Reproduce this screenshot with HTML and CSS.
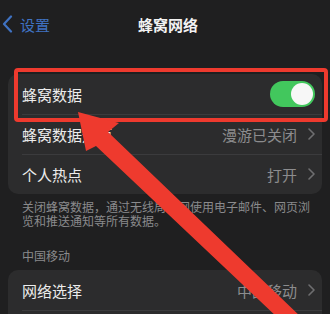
FILE: index.html
```html
<!DOCTYPE html>
<html lang="zh-CN">
<head>
<meta charset="utf-8">
<title>蜂窝网络</title>
<link rel="stylesheet" href="styles.css">
</head>
<body>
<div class="screen">
  <header class="nav">
    <div class="back">
      <svg class="back-icon" width="11" height="18" viewBox="0 0 11 18"><path d="M9 1.5 L2 9 L9 16.5" fill="none" stroke="#3f72c2" stroke-width="2.2" stroke-linecap="round" stroke-linejoin="round"/></svg>
      <span>设置</span>
    </div>
    <div class="title">蜂窝网络</div>
    <div></div>
  </header>

  <section class="card first">
    <div class="row">
      <span class="label">蜂窝数据</span>
      <span class="switch"><span class="knob"></span></span>
    </div>
    <div class="row">
      <span class="label">蜂窝数据选项</span>
      <span class="value">漫游已关闭<svg class="chev" width="7" height="12" viewBox="0 0 7 12"><path d="M1 1 L6 6 L1 11" fill="none" stroke="#6e6e70" stroke-width="1.6" stroke-linecap="round" stroke-linejoin="round"/></svg></span>
    </div>
    <div class="row">
      <span class="label">个人热点</span>
      <span class="value">打开<svg class="chev" width="7" height="12" viewBox="0 0 7 12"><path d="M1 1 L6 6 L1 11" fill="none" stroke="#6e6e70" stroke-width="1.6" stroke-linecap="round" stroke-linejoin="round"/></svg></span>
    </div>
  </section>

  <p class="footnote">关闭蜂窝数据，通过无线局域网使用电子邮件、网页浏<br>览和推送通知等所有数据。</p>

  <div class="section-head">中国移动</div>

  <section class="card">
    <div class="row">
      <span class="label">网络选择</span>
      <span class="value">中国移动<svg class="chev" width="7" height="12" viewBox="0 0 7 12"><path d="M1 1 L6 6 L1 11" fill="none" stroke="#6e6e70" stroke-width="1.6" stroke-linecap="round" stroke-linejoin="round"/></svg></span>
    </div>
    <div class="row"></div>
  </section>

  <svg class="markup" width="330" height="314" viewBox="0 0 330 314">
    <rect x="16" y="70" width="310" height="50" rx="2" fill="none" stroke="#ee3a2e" stroke-width="4"/>
    <polygon points="78,112 119,123 108,132 302,318 278,318 96,146 86,151" fill="#ee3a2e"/>
  </svg>
</div>
</body>
</html>
```

FILE: styles.css
```css
* { box-sizing: border-box; }

html, body {
  margin: 0;
  padding: 0;
  background: #1f1f20;
}

body {
  font-family: "Noto Sans CJK SC", "Noto Sans", sans-serif;
  color: #ececec;
  overflow: hidden;
}

.screen {
  position: relative;
  width: 330px;
  height: 314px;
  overflow: hidden;
}

.nav {
  height: 48px;
  display: grid;
  grid-template-columns: 1fr auto 1fr;
  align-items: center;
}

.back {
  display: flex;
  align-items: center;
  gap: 7px;
  padding-left: 2px;
  color: #3f72c2;
  font-size: 15px;
}

.back-icon { display: block; }

.title {
  font-size: 15px;
  font-weight: 700;
  color: #f2f2f2;
  padding-left: 6px;
}

.card {
  margin: 0 8px;
  background: #2c2c2d;
  border-radius: 10px;
}

.card.first { margin-top: 26px; }

.row {
  height: 40px;
  display: flex;
  align-items: center;
  justify-content: space-between;
  padding: 0 7px 0 14px;
  position: relative;
}

.row + .row::before {
  content: "";
  position: absolute;
  left: 14px;
  right: 0;
  top: 0;
  height: 1px;
  background: #3b3b3d;
}

.label {
  font-size: 15px;
  color: #ececec;
}

.value {
  display: flex;
  align-items: center;
  gap: 11px;
  font-size: 15px;
  color: #8c8c8e;
}

.chev { display: block; }

.switch {
  width: 45px;
  height: 26px;
  border-radius: 13px;
  background: #42c75d;
  display: flex;
  align-items: center;
  justify-content: flex-end;
  padding: 2px;
}

.knob {
  width: 22px;
  height: 22px;
  border-radius: 50%;
  background: #f7f7f7;
}

.footnote {
  margin: 0;
  padding: 6px 6px 0 22px;
  font-size: 12px;
  line-height: 14px;
  color: #8a8a8c;
  white-space: nowrap;
}

.section-head {
  padding: 21px 22px 0;
  font-size: 12px;
  line-height: 14px;
  color: #8a8a8c;
  margin-bottom: 7px;
}

.markup {
  position: absolute;
  left: 0;
  top: 0;
  pointer-events: none;
}
```
